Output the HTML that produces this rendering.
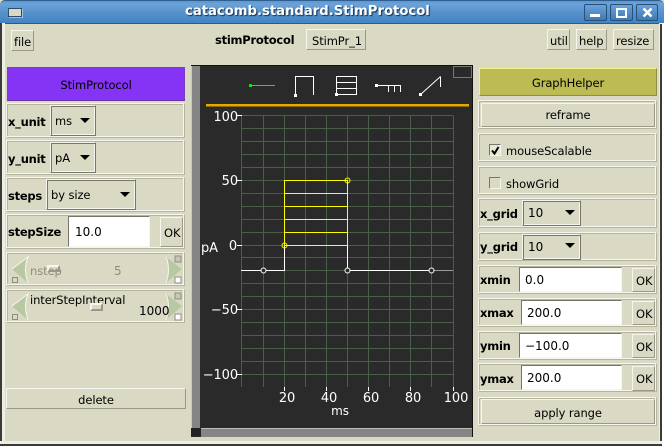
<!DOCTYPE html>
<html><head><meta charset="utf-8"><style>
html,body{margin:0;padding:0;width:664px;height:446px;overflow:hidden;background:#fff}
#w{position:absolute;left:0;top:0;width:664px;height:446px;overflow:hidden;background:#dad9c4;font-family:"DejaVu Sans",sans-serif;font-size:11.5px;letter-spacing:-.1px;color:#000}
#w div{position:absolute;box-sizing:border-box}
.t{white-space:nowrap;line-height:14px;height:14px}
.b{font-weight:bold;letter-spacing:-.25px}
.n{font-size:12px;letter-spacing:0}
.c{text-align:center;line-height:14px;white-space:nowrap}
.up{background:#dad9c4;border:1px solid;border-color:#f6f5ee #9a9988 #9a9988 #f6f5ee}
.pn{border:1px solid;border-color:#f6f5ee #b5b4a0 #b5b4a0 #f6f5ee;box-shadow:inset -1px -1px 0 #f6f5ee,inset 1px 1px 0 #b5b4a0}
.in{background:#fff;border:1px solid;border-color:#77766a #f6f5ee #f6f5ee #77766a}
.dd{background:#dad9c4;border:1px solid;border-color:#f6f5ee #77766a #77766a #f6f5ee;box-shadow:inset 1px 1px 0 #77766a,inset -1px -1px 0 #f6f5ee}
.ar{width:0;height:0;border-left:5px solid transparent;border-right:5px solid transparent;border-top:5px solid #000}
</style></head><body><div id="w">
<!-- title bar -->
<div style="left:0;top:0;width:664px;height:24px;background:linear-gradient(#5d97d2 0,#6ba2da 3px,#5a94cf 10px,#4384c2 22px,#3b76ad 23px);border-top:1px solid #2e5f8e;border-bottom:1px solid #2f5a82;border-radius:5px 5px 0 0"></div>
<div style="left:8px;top:8px;width:14px;height:9px;background:#dad9c4;border:1px solid #2d4d6c;box-shadow:1px 1px 0 #9cc0e2"></div>
<div class="t" style="left:185px;top:4px;color:#fff;font-weight:bold;font-size:13.2px;letter-spacing:0;line-height:16px;height:16px;text-shadow:1px 1px 1px #12304d">catacomb.standard.StimProtocol</div>
<div style="left:584px;top:4px;width:23px;height:17px;background:linear-gradient(#6ba2da,#3d7ab5);border:1px solid #24507a;border-radius:2px"></div>
<div style="left:610px;top:4px;width:23px;height:17px;background:linear-gradient(#6ba2da,#3d7ab5);border:1px solid #24507a;border-radius:2px"></div>
<div style="left:636px;top:4px;width:22px;height:17px;background:linear-gradient(#6ba2da,#3d7ab5);border:1px solid #24507a;border-radius:2px"></div>
<div style="left:590px;top:14px;width:10px;height:3px;background:#fff"></div>
<div style="left:616px;top:8px;width:11px;height:10px;border:2px solid #fff;border-top-width:2px"></div>
<svg style="position:absolute;left:642px;top:7px" width="11" height="11"><path d="M1.5 1.5L9.5 9.5M9.5 1.5L1.5 9.5" stroke="#fff" stroke-width="2.6"/></svg>
<!-- window border -->
<div style="left:0;top:23px;width:2px;height:423px;background:#3b3b38"></div>
<div style="left:2px;top:23px;width:3px;height:419px;background:#efeee2"></div>
<div style="left:661px;top:23px;width:3px;height:423px;background:#fff"></div>
<div style="left:659px;top:23px;width:2px;height:419px;background:#efeee2"></div>
<div style="left:660px;top:24px;width:2px;height:420px;background:#3b3b38"></div>
<div style="left:0;top:441px;width:662px;height:3px;background:#efeee2"></div>
<div style="left:0;top:444px;width:662px;height:2px;background:#3b3b38"></div>
<!-- top buttons -->
<div class="up" style="left:11px;top:30px;width:23px;height:21px"></div>
<div class="t" style="left:14px;top:35px">file</div>
<div class="t b" style="left:215px;top:33px">stimProtocol</div>
<div class="up" style="left:306px;top:29px;width:60px;height:21px"></div>
<div class="t" style="left:312px;top:34px">StimPr_1</div>
<div class="up" style="left:547px;top:29px;width:23px;height:21px"></div>
<div class="t" style="left:550px;top:34px">util</div>
<div class="up" style="left:576px;top:29px;width:31px;height:21px"></div>
<div class="t" style="left:579px;top:34px">help</div>
<div class="up" style="left:613px;top:29px;width:41px;height:21px"></div>
<div class="t" style="left:616px;top:34px">resize</div>
<!-- left column -->
<div class="c" style="left:7px;top:67px;width:178px;height:34px;background:#8533f5;border:1px solid #7a3cc4;border-bottom-color:#6a32aa;padding-top:10px">StimProtocol</div>
<div class="pn" style="left:6px;top:103px;width:179px;height:35px"></div>
<div class="t b" style="left:8px;top:115px">x_unit</div>
<div class="dd" style="left:50px;top:105px;width:46px;height:31px"></div>
<div class="t" style="left:55px;top:114px">ms</div>
<div class="ar" style="left:80px;top:118px"></div>
<div class="pn" style="left:6px;top:140px;width:179px;height:35px"></div>
<div class="t b" style="left:8px;top:152px">y_unit</div>
<div class="dd" style="left:50px;top:142px;width:46px;height:31px"></div>
<div class="t" style="left:55px;top:151px">pA</div>
<div class="ar" style="left:80px;top:155px"></div>
<div class="pn" style="left:6px;top:177px;width:179px;height:35px"></div>
<div class="t b" style="left:8px;top:189px">steps</div>
<div class="dd" style="left:46px;top:179px;width:90px;height:31px"></div>
<div class="t" style="left:51px;top:188px">by size</div>
<div class="ar" style="left:120px;top:192px"></div>
<div class="pn" style="left:6px;top:214px;width:179px;height:35px"></div>
<div class="t b" style="left:8px;top:225px">stepSize</div>
<div class="in" style="left:68px;top:216px;width:82px;height:31px"></div>
<div class="t n" style="left:75px;top:225px">10.0</div>
<div class="up" style="left:160px;top:217px;width:23px;height:30px"></div>
<div class="t" style="left:164px;top:226px">OK</div>
<!-- sliders -->
<div class="pn" style="left:6px;top:252px;width:179px;height:34px"></div>
<div class="pn" style="left:6px;top:289px;width:179px;height:34px"></div>
<svg style="position:absolute;left:0;top:250px" width="190" height="76">
<g fill="#b8c8a2"><path d="M12 19L28 7Q23 19 28 33Z"/><path d="M12 56L28 44Q23 56 28 70Z"/><path d="M182 19L166 7Q171 19 166 33Z"/><path d="M182 56L166 44Q171 56 166 70Z"/></g>
<g fill="none" stroke="#f6f5ee"><path d="M12 19L28 7Q23 19 28 33"/><path d="M12 56L28 44Q23 56 28 70"/><path d="M166 7Q171 19 166 33"/><path d="M166 44Q171 56 166 70"/></g>
<g fill="none" stroke="#8f8e80"><rect x="12.5" y="27.5" width="5" height="5"/><rect x="12.5" y="64.5" width="5" height="5"/></g>
<g shape-rendering="crispEdges"><rect x="175" y="6" width="6" height="6" fill="#c8c7b4" stroke="#8f8e80"/><rect x="175" y="27" width="6" height="6" fill="#fff" stroke="#8f8e80"/><rect x="175" y="43" width="6" height="6" fill="#c8c7b4" stroke="#8f8e80"/><rect x="175" y="64" width="6" height="6" fill="#fff" stroke="#8f8e80"/></g>
</svg>
<div class="t" style="left:30px;top:264px;color:#8f8e80">nstep</div>
<div style="left:47px;top:265px;width:13px;height:7px;border:2px solid #f6f5ee;border-right-color:#9a9988;border-bottom-color:#9a9988"></div>
<div class="t n" style="left:114px;top:264px;color:#8f8e80">5</div>
<div class="t" style="left:30px;top:293px">interStepInterval</div>
<div style="left:90px;top:303px;width:13px;height:8px;border:2px solid #f6f5ee;border-right-color:#9a9988;border-bottom-color:#9a9988"></div>
<div class="t n" style="left:139px;top:304px">1000</div>
<div class="up c" style="left:6px;top:388px;width:180px;height:21px;padding-top:4px">delete</div>
<!-- graph -->
<svg style="position:absolute;left:191px;top:65px;font-family:'DejaVu Sans',sans-serif;font-size:13px" width="282" height="372" viewBox="191 65 282 372">
<rect x="191" y="65" width="282" height="372" fill="#2a2a2a"/>
<rect x="191" y="65" width="282" height="1" fill="#111"/>
<rect x="191" y="66" width="1" height="362" fill="#c8c8c0"/>
<rect x="192" y="66" width="8" height="362" fill="#858585"/>
<rect x="191" y="428" width="10" height="8" fill="#222"/>
<rect x="201" y="428" width="271" height="9" fill="#858585"/>
<rect x="201" y="428" width="271" height="1" fill="#c0c0b8"/>
<rect x="472" y="65" width="1" height="372" fill="#111"/>
<rect x="453.5" y="66.5" width="18" height="11" fill="none" stroke="#77776f"/>
<rect x="206" y="104" width="263" height="3" fill="#e8a800"/>
<rect x="206" y="106" width="263" height="1" fill="#8a6a00"/>
<g shape-rendering="crispEdges">
<rect x="249" y="84" width="3" height="3" fill="#00f000"/><rect x="251" y="85" width="24" height="1" fill="#00f000"/>
<path d="M295.5 95V76.5H313.5V95" fill="none" stroke="#fff"/><rect x="294" y="94" width="3" height="3" fill="#fff"/>
<path d="M336.5 76.5H356.5V94.5H336.5ZM336.5 82.5H356.5M336.5 88.5H356.5" fill="none" stroke="#fff"/><rect x="335" y="93" width="3" height="3" fill="#fff"/>
<rect x="375" y="84" width="3" height="3" fill="#fff"/><path d="M377 85.5H400.5V92M388.5 85.5V92M394.5 85.5V92" fill="none" stroke="#fff"/>
<rect x="419" y="93" width="3" height="3" fill="#fff"/>
<path d="M440.5 76.5V87" stroke="#fff" fill="none"/>
</g>
<path d="M420.5 94.5L440.5 76.5" stroke="#fff" fill="none"/>
<g stroke="#4a5e4a" fill="none" shape-rendering="crispEdges">
<path d="M241.5 115.5V387M263.5 115.5V387M284.5 115.5V387M305.5 115.5V387M326.5 115.5V387M347.5 115.5V387M368.5 115.5V387M389.5 115.5V387M410.5 115.5V387M431.5 115.5V387M453.5 115.5V387"/>
<path d="M241 115.5H453M241 128.5H453M241 141.5H453M241 154.5H453M241 167.5H453M241 180.5H453M241 193.5H453M241 206.5H453M241 219.5H453M241 232.5H453M241 245.5H453M241 257.5H453M241 270.5H453M241 283.5H453M241 296.5H453M241 309.5H453M241 322.5H453M241 335.5H453M241 348.5H453M241 361.5H453M241 374.5H453"/>
</g>
<g stroke="#fff" fill="none" shape-rendering="crispEdges">
<path d="M237 115.5H242M237 180.5H242M237 245.5H242M237 309.5H242M237 374.5H242M284.5 387V391M326.5 387V391M368.5 387V391M410.5 387V391M453.5 387V391"/>
<path d="M241 270.5H284.5V245M347.5 245V270.5H431"/>
</g>
<path d="M431 270.5H453" stroke="#999" shape-rendering="crispEdges"/>
<path d="M284.5 245.5V180.5H347.5V245.5H284.5M284.5 193.5H347.5M284.5 206.5H347.5M284.5 219.5H347.5M284.5 232.5H347.5" stroke="#ffff00" fill="none" shape-rendering="crispEdges"/>
<g fill="none" stroke="#ffff00"><circle cx="284.5" cy="245.5" r="2.5"/><circle cx="347.5" cy="180.5" r="2.5"/></g>
<g fill="#2a2a2a" stroke="#fff"><circle cx="263.5" cy="270.5" r="2.5"/><circle cx="347.5" cy="270.5" r="2.5"/><circle cx="431.5" cy="270.5" r="2.5"/></g>
<g fill="#fff" text-anchor="end">
<text x="238" y="121">100</text><text x="238" y="185">50</text><text x="237" y="250">0</text><text x="238" y="314">−50</text><text x="238" y="379">−100</text>
</g>
<g fill="#fff" text-anchor="middle">
<text x="287" y="402">20</text><text x="329" y="402">40</text><text x="371" y="402">60</text><text x="413" y="402">80</text><text x="456" y="402">100</text>
<text x="340" y="415" font-size="12">ms</text>
</g>
<text x="201" y="252" fill="#fff" font-size="13">pA</text>
</svg>
<!-- right column -->
<div class="c" style="left:479px;top:68px;width:178px;height:28px;background:#bdbb53;border:1px solid;border-color:#f4f38a #8f8e40 #8f8e40 #f4f38a;padding-top:7px">GraphHelper</div>
<div class="pn" style="left:478px;top:100px;width:179px;height:29px"></div>
<div class="up c" style="left:481px;top:103px;width:174px;height:24px;padding-top:4px">reframe</div>
<div class="pn" style="left:478px;top:133px;width:179px;height:29px"></div>
<div style="left:489px;top:144px;width:12px;height:12px;border:1px solid;border-color:#77766a #f6f5ee #f6f5ee #77766a;background:#e8e7d8"></div>
<svg style="position:absolute;left:490px;top:145px" width="11" height="11"><path d="M2 5.5L4.5 8.5L8.5 2" stroke="#000" stroke-width="2" fill="none"/></svg>
<div class="t" style="left:506px;top:144px">mouseScalable</div>
<div class="pn" style="left:478px;top:166px;width:179px;height:29px"></div>
<div style="left:489px;top:177px;width:12px;height:12px;border:1px solid;border-color:#77766a #f6f5ee #f6f5ee #77766a;background:#dad9c4"></div>
<div class="t" style="left:506px;top:177px">showGrid</div>
<div class="pn" style="left:478px;top:198px;width:179px;height:30px"></div>
<div class="t b" style="left:480px;top:207px">x_grid</div>
<div class="dd" style="left:522px;top:200px;width:59px;height:26px"></div>
<div class="t n" style="left:528px;top:206px">10</div>
<div class="ar" style="left:565px;top:210px"></div>
<div class="pn" style="left:478px;top:232px;width:179px;height:29px"></div>
<div class="t b" style="left:480px;top:240px">y_grid</div>
<div class="dd" style="left:522px;top:234px;width:59px;height:26px"></div>
<div class="t n" style="left:528px;top:240px">10</div>
<div class="ar" style="left:565px;top:243px"></div>
<div class="pn" style="left:478px;top:265px;width:179px;height:29px"></div>
<div class="t b" style="left:480px;top:273px">xmin</div>
<div class="in" style="left:519px;top:267px;width:103px;height:25px"></div>
<div class="t n" style="left:525px;top:273px">0.0</div>
<div class="up" style="left:632px;top:268px;width:23px;height:24px"></div>
<div class="t" style="left:636px;top:274px">OK</div>
<div class="pn" style="left:478px;top:298px;width:179px;height:29px"></div>
<div class="t b" style="left:480px;top:306px">xmax</div>
<div class="in" style="left:521px;top:300px;width:101px;height:25px"></div>
<div class="t n" style="left:527px;top:306px">200.0</div>
<div class="up" style="left:632px;top:301px;width:23px;height:24px"></div>
<div class="t" style="left:636px;top:307px">OK</div>
<div class="pn" style="left:478px;top:331px;width:179px;height:29px"></div>
<div class="t b" style="left:480px;top:339px">ymin</div>
<div class="in" style="left:519px;top:333px;width:103px;height:25px"></div>
<div class="t n" style="left:525px;top:339px">−100.0</div>
<div class="up" style="left:632px;top:334px;width:23px;height:24px"></div>
<div class="t" style="left:636px;top:340px">OK</div>
<div class="pn" style="left:478px;top:363px;width:179px;height:29px"></div>
<div class="t b" style="left:480px;top:372px">ymax</div>
<div class="in" style="left:521px;top:365px;width:101px;height:25px"></div>
<div class="t n" style="left:527px;top:371px">200.0</div>
<div class="up" style="left:632px;top:366px;width:23px;height:25px"></div>
<div class="t" style="left:636px;top:372px">OK</div>
<div class="pn" style="left:478px;top:397px;width:179px;height:29px"></div>
<div class="up c" style="left:481px;top:399px;width:174px;height:25px;padding-top:6px">apply range</div>
</div></body></html>
